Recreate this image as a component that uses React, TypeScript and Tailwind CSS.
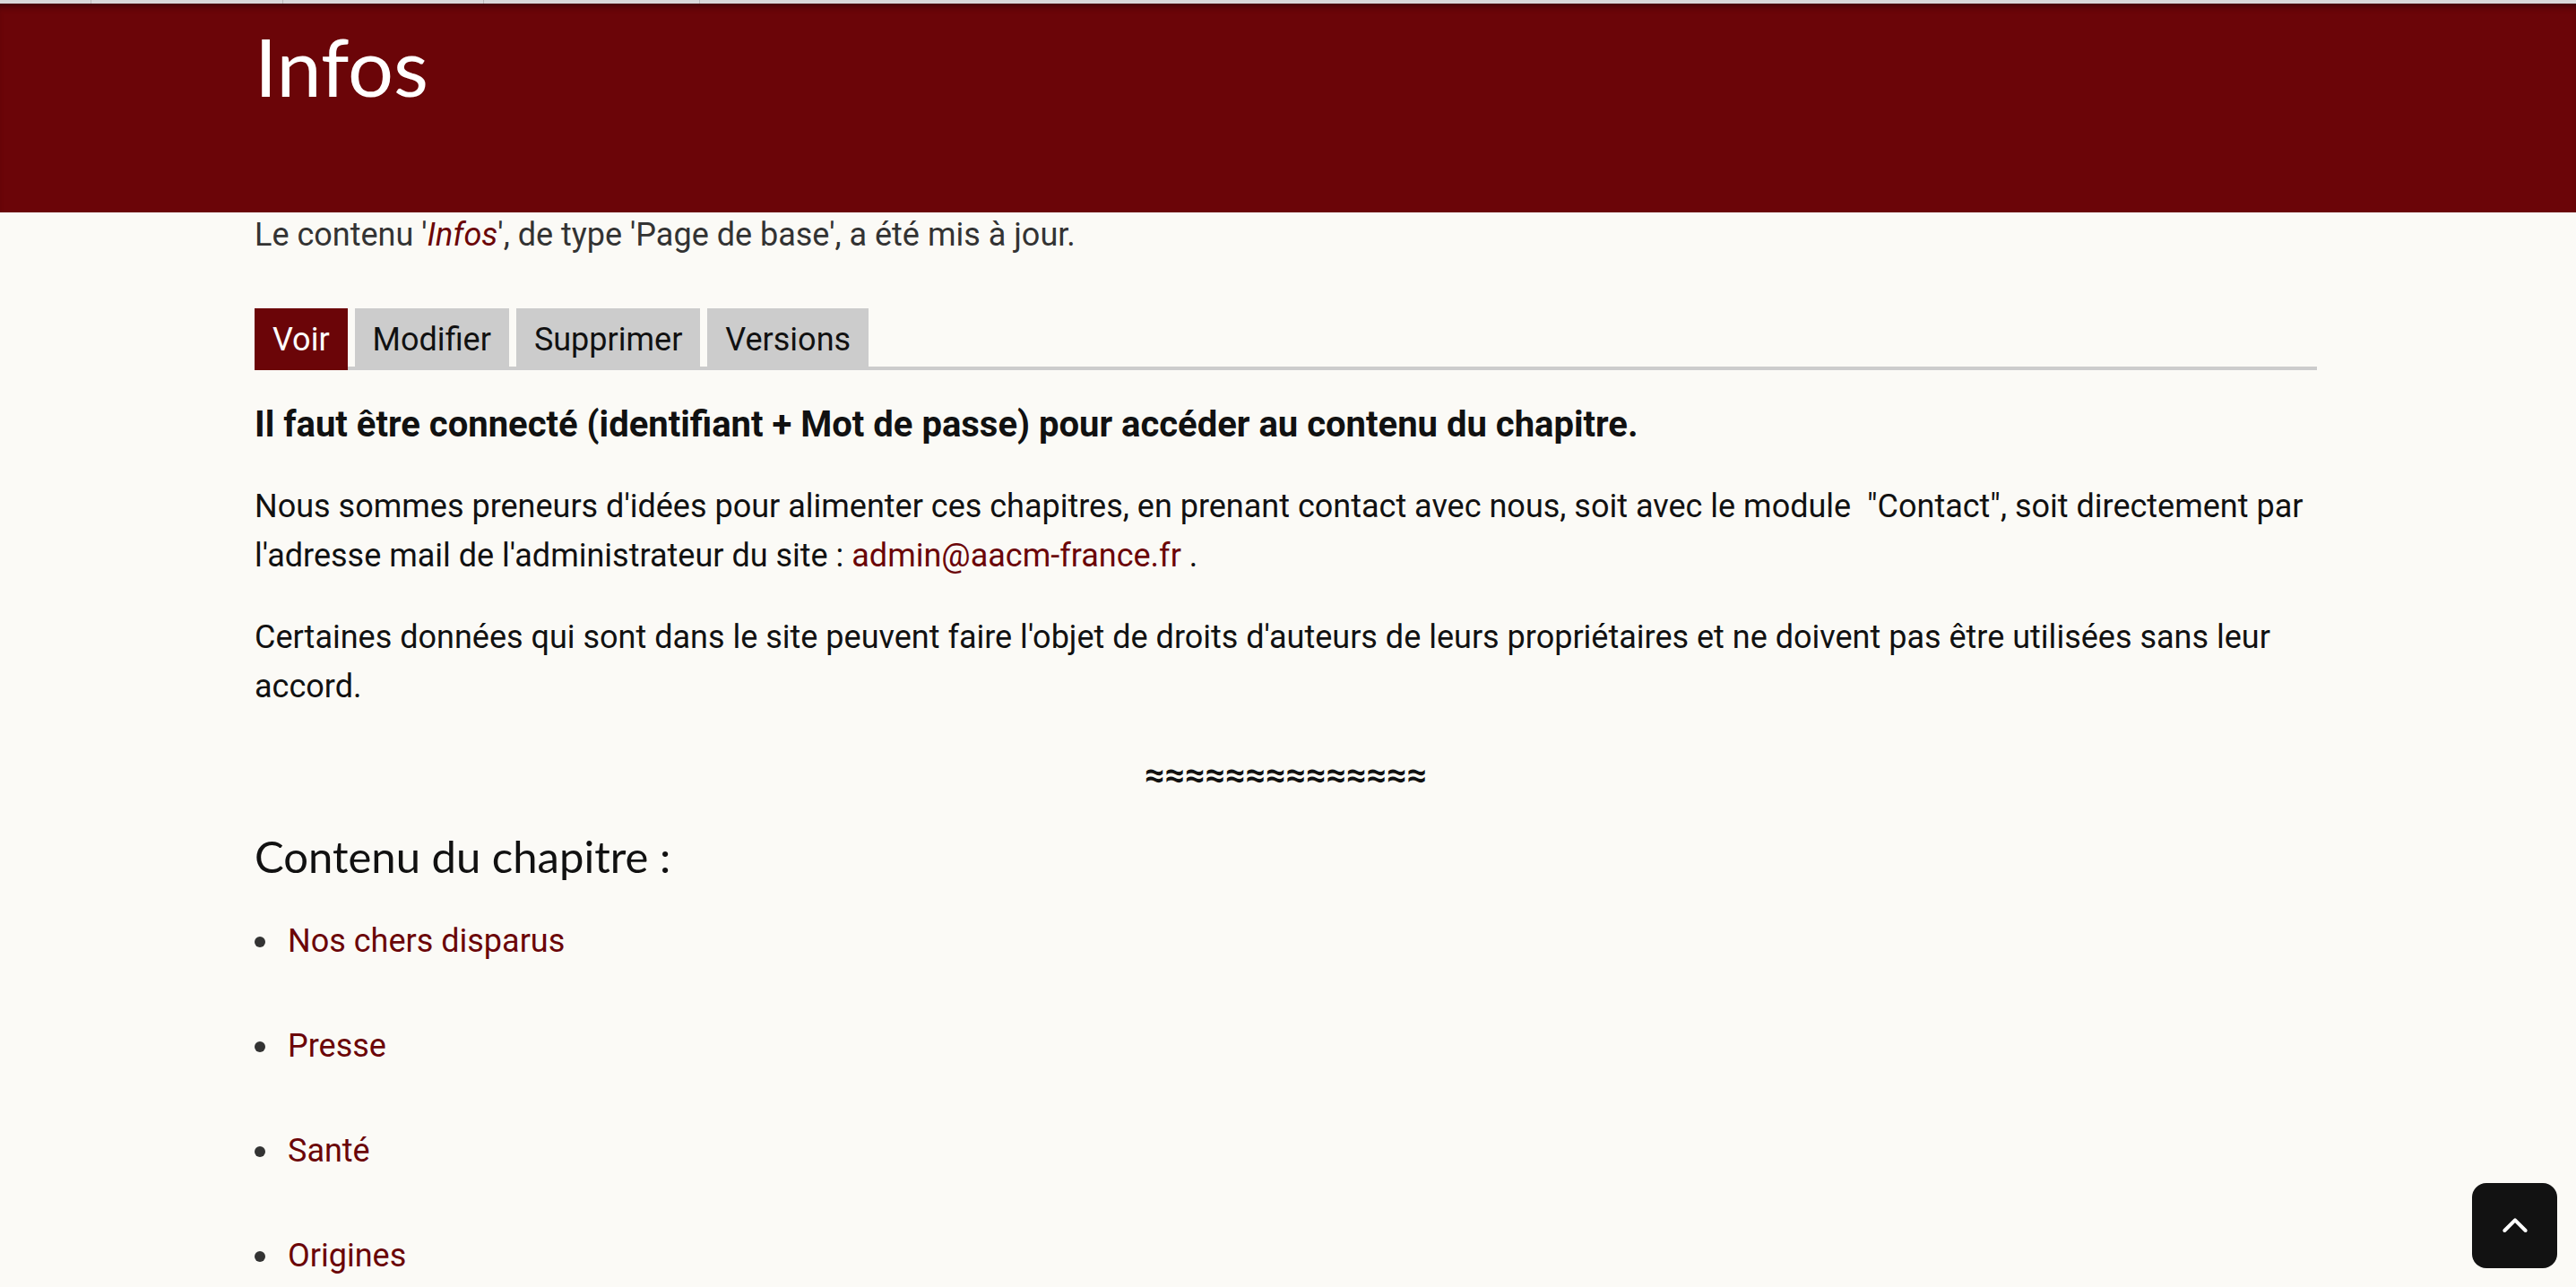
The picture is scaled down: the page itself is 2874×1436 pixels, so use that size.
import React from "react";

const tabs = [
  { label: "Voir", active: true },
  { label: "Modifier", active: false },
  { label: "Supprimer", active: false },
  { label: "Versions", active: false },
];

const chapters = ["Nos chers disparus", "Presse", "Santé", "Origines"];

export default function App() {
  return (
    <div className="min-h-screen bg-[#fbfaf6] font-['Roboto',sans-serif] text-[#111]">
      {/* Top strip (remains of the menu bar) */}
      <div className="h-[4px] bg-[#d9d9d9] flex">
        <div className="w-[102px] border-r border-[#bbb]"></div>
        <div className="w-[214px] border-r border-[#bbb]"></div>
        <div className="w-[224px] border-r border-[#bbb]"></div>
        <div className="w-[241px] border-r border-[#bbb]"></div>
      </div>

      {/* Page title banner */}
      <header className="h-[233px] bg-[#6b0508] shadow-[inset_0_8px_8px_-6px_rgba(0,0,0,0.5)] pl-[284px] pr-[289px]">
        <div className="pt-[15px]">
          <h1 className="font-['Lato',sans-serif] text-[90px] leading-[1.2] text-white">Infos</h1>
        </div>
      </header>

      <main className="pl-[284px] pr-[289px] pb-20">
        <p className="text-[36px] leading-[50px] text-[#333]">
          Le contenu '<em className="text-[#6b0508]">Infos</em>', de type 'Page de base', a été mis à jour.
        </p>

        {/* Tabs */}
        <div className="mt-[57px] flex gap-[8px] border-b-[4px] border-[#cccccc]">
          {tabs.map((t) => (
            <a
              key={t.label}
              href="#"
              className={`h-[69px] -mb-[4px] px-[20px] flex items-center text-[36px] ${
                t.active ? "bg-[#6b0508] text-white" : "bg-[#cccccc] text-[#111]"
              }`}
            >
              {t.label}
            </a>
          ))}
        </div>

        <div className="mt-[33px] text-[36px] leading-[55px] text-[#111]">
          <p className="font-bold text-[40px] mb-[37px]">
            Il faut être connecté (identifiant + Mot de passe) pour accéder au contenu du chapitre.
          </p>
          <p className="mb-[36px]">
            Nous sommes preneurs d'idées pour alimenter ces chapitres, en prenant contact avec nous, soit avec le module&nbsp; "Contact", soit directement par l'adresse mail de l'administrateur du site :{" "}
            <a href="#" className="text-[#6b0508]">admin@aacm-france.fr</a> .
          </p>
          <p className="mb-[44px]">
            Certaines données qui sont dans le site peuvent faire l'objet de droits d'auteurs de leurs propriétaires et ne doivent pas être utilisées sans leur accord.
          </p>
          <p className="text-center font-bold text-[39px]">≈≈≈≈≈≈≈≈≈≈≈≈≈≈</p>
        </div>

        <h2 className="mt-[30px] font-['Lato',sans-serif] text-[49px] leading-[64px] text-[#111]">
          Contenu du chapitre :
        </h2>

        <ul className="mt-[36px] text-[36px] leading-[55px]">
          {chapters.map((c) => (
            <li key={c} className="mb-[62px] flex items-center">
              <span className="w-[12px] h-[12px] rounded-full bg-[#333] mr-[25px] shrink-0"></span>
              <a href="#" className="text-[#6b0508]">{c}</a>
            </li>
          ))}
        </ul>
      </main>

      {/* Back to top */}
      <button className="fixed right-[21px] bottom-[21px] w-[95px] h-[95px] rounded-[16px] bg-[#121212] flex items-center justify-center">
        <svg width="40" height="40" viewBox="0 0 24 24" fill="none" stroke="white" strokeWidth="2.4" strokeLinecap="round" strokeLinejoin="round">
          <path d="M5 15l7-7 7 7" />
        </svg>
      </button>
    </div>
  );
}
